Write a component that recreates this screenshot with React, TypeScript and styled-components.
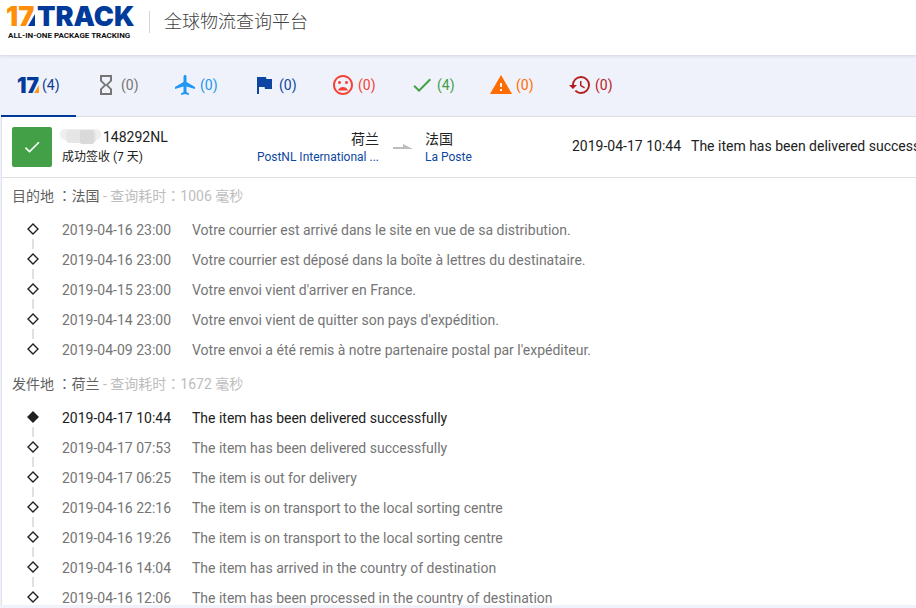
import React from "react";
import styled, { createGlobalStyle } from "styled-components";
import {
  MdHourglassEmpty,
  MdLocalAirport,
  MdFlag,
  MdMoodBad,
  MdCheck,
  MdWarning,
  MdHistory,
} from "react-icons/md";

const GlobalStyle = createGlobalStyle`
  * { box-sizing: border-box; }
  html, body, #root { height: 100%; }
  body {
    margin: 0;
    overflow: hidden;
    background: #eff2fa;
    color: #212121;
    font: 14px/20px Roboto, "Noto Sans CJK SC", sans-serif;
  }
`;

const Page = styled.div`
  display: flex;
  flex-direction: column;
  height: 100vh;
  padding-bottom: 3px;
`;

const Header = styled.header`
  display: flex;
  flex: none;
  align-items: flex-start;
  height: 55px;
  background: #fff;
  box-shadow: 0 1px 3px rgba(40, 50, 90, 0.16);
`;

const LogoLink = styled.a`
  display: block;
  height: 42px;
  margin-left: 6px;
`;

const Slogan = styled.h1`
  margin: 11px 0 0 14px;
  padding-left: 14px;
  border-left: 1px solid #d5d5d5;
  color: #424242;
  font-size: 18px;
  font-weight: 300;
  line-height: 22px;
`;

const TabBar = styled.nav`
  display: flex;
  flex: none;
  gap: 4px;
  height: 62px;
  margin-left: 1px;
  border-bottom: 1px solid #dcdde1;
`;

const Tab = styled.button<{ $color: string; $active?: boolean }>`
  display: flex;
  align-items: center;
  gap: 3px;
  height: 62px;
  width: 75px;
  padding: 0 0 0 14px;
  border: 0;
  border-bottom: 2px solid ${(p) => (p.$active ? "#003a9b" : "transparent")};
  background: none;
  color: ${(p) => p.$color};
  font: inherit;
  cursor: pointer;

  svg {
    flex: none;
  }
`;

const Panel = styled.main`
  flex: 1;
  min-height: 0;
  margin-left: 1px;
  overflow: hidden;
  border-left: 1px solid #dfe2ec;
  background: #fff;
`;

const Summary = styled.section`
  display: flex;
  align-items: center;
  height: 61px;
  padding-left: 10px;
  border-bottom: 1px solid #e0e0e0;
  white-space: nowrap;
`;

const StatusBadge = styled.div`
  display: grid;
  flex: none;
  place-items: center;
  width: 40px;
  height: 40px;
  border-radius: 2px;
  background: #43a047;
  color: #fff;
`;

const Parcel = styled.div`
  flex: none;
  width: 195px;
  padding-left: 8px;
`;

const ParcelNumber = styled.div`
  display: flex;
  align-items: center;
`;

const ParcelState = styled.div`
  padding-left: 2px;
  font-size: 12px;
`;

const Place = styled.div<{ $end?: boolean }>`
  flex: none;
  width: ${(p) => (p.$end ? "132px" : "147px")};
  text-align: ${(p) => (p.$end ? "right" : "left")};
`;

const Carrier = styled.a`
  display: block;
  line-height: 16px;
  color: #0d47a1;
  font-size: 12px;
  text-decoration: none;
`;

const Arrow = styled.svg`
  flex: none;
  margin: 0 12px 0 14px;
`;

const Latest = styled.p`
  flex: 1;
  min-width: 0;
  margin: 0;
  padding-bottom: 2px;
  overflow: hidden;

  time {
    margin-right: 10px;
  }
`;

const Route = styled.section`
  padding: 8px 0 1px 10px;
`;

const RouteTitle = styled.h2`
  margin: 0 0 9px;
  color: #616161;
  font-size: 14px;
  font-weight: 400;
  line-height: 20px;
`;

const Elapsed = styled.span`
  color: #bdbdbd;
`;

const Colon = styled.span`
  font-family: "Noto Sans CJK TC", sans-serif;
  line-height: 1;
`;

const Events = styled.ol`
  margin: 0;
  padding: 0;
  list-style: none;
`;

const Event = styled.li<{ $current: boolean }>`
  display: grid;
  grid-template-columns: 50px 130px 1fr;
  height: 30px;
  color: ${(p) => (p.$current ? "#212121" : "#757575")};
  line-height: 30px;
  white-space: nowrap;
`;

const Marker = styled.svg`
  margin-left: 14px;
  overflow: visible;
`;

const Logo = () => (
  <svg width="129" height="42" viewBox="0 0 129 42" role="img" aria-label="17TRACK">
    <g fontFamily="Inter, sans-serif" fontWeight="900" fontSize="27">
      <text x="0" y="26" fill="#ff8f0b">17</text>
      <text x="31" y="26" fill="#003a9b">TRACK</text>
    </g>
    <path d="M29 14V26H22Z" fill="#003a9b" />
    <text x="2" y="38" fill="#111" fontFamily="Roboto, sans-serif" fontWeight="700" fontSize="8">
      ALL-IN-ONE PACKAGE TRACKING
    </text>
  </svg>
);

const AllIcon = () => (
  <svg width="24" height="24" viewBox="0 0 24 24" aria-hidden="true">
    <text x="2" y="20" fill="#003a9b" fontFamily="Inter, sans-serif" fontWeight="900" fontSize="21">17</text>
    <path d="M24 12V20H19Z" fill="#ff9a1a" />
  </svg>
);

const tabs = [
  { name: "全部", icon: <AllIcon />, count: 4, color: "#0d3b94" },
  { name: "查询不到", icon: <MdHourglassEmpty size={24} />, count: 0, color: "#757575" },
  { name: "运输途中", icon: <MdLocalAirport size={24} />, count: 0, color: "#2196f3" },
  { name: "到达待取", icon: <MdFlag size={24} />, count: 0, color: "#0d47a1" },
  { name: "投递失败", icon: <MdMoodBad size={24} />, count: 0, color: "#f44336" },
  { name: "成功签收", icon: <MdCheck size={24} />, count: 4, color: "#43a047" },
  { name: "可能异常", icon: <MdWarning size={24} />, count: 0, color: "#ff6d00" },
  { name: "运输过久", icon: <MdHistory size={24} />, count: 0, color: "#b71c1c" },
];

const routes = [
  {
    end: "目的地",
    country: "法国",
    elapsed: "1006 毫秒",
    delivered: false,
    events: [
      ["2019-04-16 23:00", "Votre courrier est arrivé dans le site en vue de sa distribution."],
      ["2019-04-16 23:00", "Votre courrier est déposé dans la boîte à lettres du destinataire."],
      ["2019-04-15 23:00", "Votre envoi vient d'arriver en France."],
      ["2019-04-14 23:00", "Votre envoi vient de quitter son pays d'expédition."],
      ["2019-04-09 23:00", "Votre envoi a été remis à notre partenaire postal par l'expéditeur."],
    ],
  },
  {
    end: "发件地",
    country: "荷兰",
    elapsed: "1672 毫秒",
    delivered: true,
    events: [
      ["2019-04-17 10:44", "The item has been delivered successfully"],
      ["2019-04-17 07:53", "The item has been delivered successfully"],
      ["2019-04-17 06:25", "The item is out for delivery"],
      ["2019-04-16 22:16", "The item is on transport to the local sorting centre"],
      ["2019-04-16 19:26", "The item is on transport to the local sorting centre"],
      ["2019-04-16 14:04", "The item has arrived in the country of destination"],
      ["2019-04-16 12:06", "The item has been processed in the country of destination"],
    ],
  },
];

export default function App() {
  return (
    <Page>
      <GlobalStyle />
      <Header>
        <LogoLink href="#"><Logo /></LogoLink>
        <Slogan>全球物流查询平台</Slogan>
      </Header>
      <TabBar>
        {tabs.map((tab, i) => (
          <Tab key={tab.name} $color={tab.color} $active={i === 0} aria-label={tab.name}>
            {tab.icon}
            <span>({tab.count})</span>
          </Tab>
        ))}
      </TabBar>
      <Panel>
        <Summary>
          <StatusBadge><MdCheck size={20} /></StatusBadge>
          <Parcel>
            <ParcelNumber>
              <svg width="43" height="20" aria-hidden="true">
                <rect x="0" y="2" width="41" height="11" rx="5" fill="#efefef" />
                <rect x="6" y="3" width="30" height="13" rx="4" fill="#e6e6e6" />
                <rect x="20" y="3" width="14" height="14" rx="2" fill="#dadada" />
              </svg>
              148292NL
            </ParcelNumber>
            <ParcelState>成功签收 (7 天)</ParcelState>
          </Parcel>
          <Place $end>
            荷兰
            <Carrier href="#">PostNL International ...</Carrier>
          </Place>
          <Arrow width="20" height="6" aria-hidden="true">
            <path d="M0 3H10V0L20 5H0Z" fill="#bdbdbd" />
          </Arrow>
          <Place>
            法国
            <Carrier href="#">La Poste</Carrier>
          </Place>
          <Latest>
            <time>2019-04-17 10:44</time>
            The item has been delivered successfully
          </Latest>
        </Summary>
        {routes.map((route) => (
          <Route key={route.end}>
            <RouteTitle>
              {route.end} <Colon lang="zh-Hant">：</Colon>
              {route.country}{" "}
              <Elapsed>
                - 查询耗时<Colon lang="zh-Hant">：</Colon>
                {route.elapsed}
              </Elapsed>
            </RouteTitle>
            <Events>
              {route.events.map(([time, text], i) => {
                const current = route.delivered && i === 0;
                return (
                  <Event key={i} $current={current}>
                    <Marker width="14" height="30" aria-hidden="true">
                      <path
                        d="M7 9L12 14L7 19L2 14Z"
                        fill={current ? "#212121" : "#fff"}
                        stroke="#212121"
                        strokeWidth="1.4"
                      />
                      {i < route.events.length - 1 && (
                        <path d="M7 24V34" stroke="#e0e0e0" strokeWidth="2" />
                      )}
                    </Marker>
                    <time>{time}</time>
                    <span>{text}</span>
                  </Event>
                );
              })}
            </Events>
          </Route>
        ))}
      </Panel>
    </Page>
  );
}
